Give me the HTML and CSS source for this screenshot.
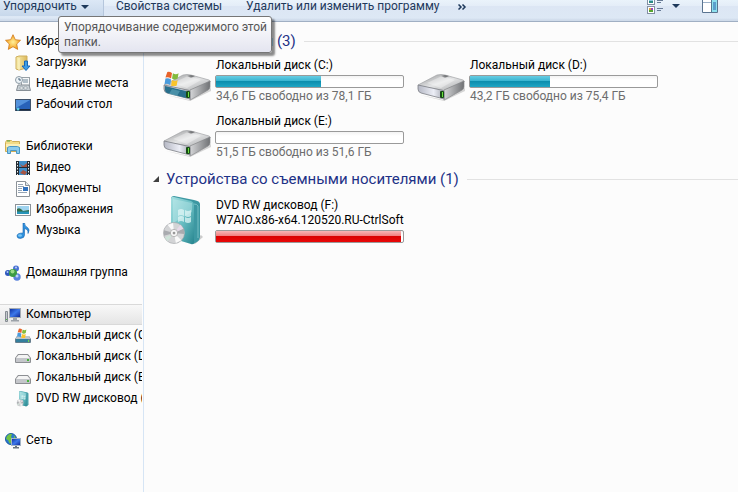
FILE: index.html
```html
<!DOCTYPE html>
<html lang="ru">
<head>
    <meta charset="UTF-8">
    <meta name="viewport" content="width=device-width, initial-scale=1.0">
    <title>Компьютер</title>
    <link rel="stylesheet" href="styles.css">
</head>
<body>
    <svg class="defs" aria-hidden="true">
        <defs>
            <linearGradient id="g-top" x1="0" y1="0" x2="1" y2="1">
                <stop offset="0" stop-color="#909294"/>
                <stop offset=".5" stop-color="#e4e5e6"/>
                <stop offset="1" stop-color="#a4a6a8"/>
            </linearGradient>
            <linearGradient id="g-side" x1="0" y1="0" x2="1" y2="0">
                <stop offset="0" stop-color="#d5d6d8"/>
                <stop offset="1" stop-color="#707275"/>
            </linearGradient>
            <linearGradient id="g-front" x1="0" y1="0" x2="1" y2="0">
                <stop offset="0" stop-color="#b5b8c4"/>
                <stop offset=".6" stop-color="#eceef6"/>
                <stop offset="1" stop-color="#a5a8b2"/>
            </linearGradient>
            <linearGradient id="g-teal" x1="0" y1="0" x2="1" y2="1">
                <stop offset="0" stop-color="#a4dfe0"/>
                <stop offset=".5" stop-color="#6cc0c5"/>
                <stop offset="1" stop-color="#26858f"/>
            </linearGradient>
            <linearGradient id="g-folder" x1="0" y1="0" x2="1" y2="0">
                <stop offset="0" stop-color="#f8efb0"/>
                <stop offset="1" stop-color="#dcb95c"/>
            </linearGradient>
            <linearGradient id="g-screen" x1="0" y1="0" x2="1" y2="1">
                <stop offset="0" stop-color="#0a2a9c"/>
                <stop offset=".5" stop-color="#3c78ea"/>
                <stop offset="1" stop-color="#0a1f8c"/>
            </linearGradient>
            <radialGradient id="g-star">
                <stop offset="0" stop-color="#fff09a"/>
                <stop offset="1" stop-color="#f6a01c"/>
            </radialGradient>
        </defs>
        <symbol id="flag" viewBox="0 0 16 16">
            <path d="M3 1q2-1 5 1L7 8Q4 6 1 7z" fill="#e8632b"/>
            <path d="M9 2.500q3 2 6 0L14 8q-3 2-6 0z" fill="#83bb3c"/>
            <path d="M1 8q3-1 6 1l-1 6q-3-2-6-1z" fill="#4a9bdc"/>
            <path d="M8 9.500q3 2 6 0l-1 6q-3 2-6 0z" fill="#fac42c"/>
        </symbol>
        <symbol id="drive" viewBox="0 0 48 28">
            <path d="M3 22l24 5 21-12v3L27 28z" fill="#bbb" opacity=".6"/>
            <path d="M1 12L20 2q4-1 8 0l18 5q2 1 1 2L28 17q-2 1-4 0L2 13z" fill="url(#g-top)" stroke="#a2a4a6" stroke-width=".7"/>
            <path d="M27 17L47 8v6q0 2-2 3l-16 9-2 1z" fill="url(#g-side)" stroke="#85878a" stroke-width=".7"/>
            <path d="M1 12l23 5q3 0 3 2v7L4 20q-3-1-3-4z" fill="url(#g-front)" stroke="#7c7f85" stroke-width=".8"/>
            <path d="M24 3l4-1 4 1-4 2z" fill="#77797b"/>
            <path d="M10 10l15-7 13 4-14 8z" fill="#fff" opacity=".35"/>
            <rect x="23" y="18" width="4" height="7" rx="1" fill="#174d16"/>
            <path d="M25.500 19v5" stroke="#6be03d"/>
        </symbol>
        <symbol id="drive-s" viewBox="0 0 16 16">
            <path d="M3 5h10l3 4v4q0 1-1 1H1q-1 0-1-1V9z" fill="#8d8f93"/>
            <path d="M3.500 6h9L15 9H1z" fill="#f4f4f4"/>
            <rect x="1" y="9" width="14" height="4" fill="#c4c6ca"/>
            <rect x="12" y="10" width="2" height="2" fill="#46b53b"/>
        </symbol>
        <symbol id="disc" viewBox="0 0 24 24">
            <circle cx="12" cy="12" r="11.500" fill="#d3d4d6" stroke="#a4a7aa" stroke-width=".7"/>
            <path d="M12 12L5 3l6-2zM12 12l8 8-6 3z" fill="#fafafa"/>
            <path d="M12 12L1 9v6zM12 12l11-5v6z" fill="#a9abaf"/>
            <path d="M12 12l7-9 3 4z" fill="#e6d9e8"/>
            <path d="M12 12l-7 9-3-4z" fill="#cfe3d9"/>
            <circle cx="12" cy="12" r="4" fill="#f7f7f7" stroke="#999" stroke-width=".7"/>
            <circle cx="12" cy="12" r="1.500" fill="#999"/>
        </symbol>
        <symbol id="dvd" viewBox="0 0 40 50">
            <path d="M28 47l10-8 2 2-8 7z" fill="#ccc"/>
            <path d="M8 3q0-3 3-3l20 4q6 1 6 4v33q0 3-3 5l-4 2L8 40z" fill="#3d98a2"/>
            <path d="M8 3q0-3 3-2l17 4q3 1 3 4v37q0 3-3 2L8 42z" fill="url(#g-teal)"/>
            <path d="M10 3l19 4v9L10 27z" fill="#d3f4f4" opacity=".35"/>
            <path d="M31 8q3 0 4 2v32" fill="none" stroke="#8fd0d4" stroke-width=".7"/>
            <path d="M15 14q3-2 6 0v6q-3-2-6 0zM22 14q3 2 6 0v6q-3 2-6 0zM15 21q3-2 6 0v5q-3-2-6 0zM22 21q3 2 6 0v5q-3 2-6 0z" fill="#dff6f5" opacity=".75"/>
            <use href="#disc" x="0" y="25" width="22" height="24"/>
        </symbol>
        <symbol id="globe" viewBox="0 0 12 12">
            <circle cx="6" cy="6" r="5.500" fill="#2a78cf" stroke="#185aa4"/>
            <path d="M2 3q3-3 5-2L6 4l2 2-3 5-2-4-2-1zM9 2l2 4-2 1z" fill="#72c341"/>
        </symbol>
    </svg>

    <header class="toolbar">
        <button type="button" class="tool tool-active">Упорядочить <span class="caret"></span></button>
        <button type="button" class="tool">Свойства системы</button>
        <button type="button" class="tool">Удалить или изменить программу</button>
        <button type="button" class="tool more" aria-label="Ещё">
            <svg width="9" height="6" viewBox="0 0 9 6"><path d="M.5.5L3 3 .5 5.500M4.500.5L7 3 4.500 5.500" fill="none" stroke="#1e395b" stroke-width="1.500"/></svg>
        </button>
        <div class="tool-right">
            <button type="button" class="view" aria-label="Изменить представление">
                <svg width="16" height="14" viewBox="0 0 16 14">
                    <rect x=".5" y="-1.500" width="7" height="6" fill="#fff" stroke="#8290a4"/>
                    <path d="M2 0h4v1H2z" fill="#8cc8e0"/><path d="M2 1h4v2H2z" fill="#2b8a83"/>
                    <rect x=".5" y="6.500" width="7" height="7" fill="#fff" stroke="#8290a4"/>
                    <path d="M2 8h2v2H2z" fill="#d9a23c"/><path d="M4 8h2v2H4z" fill="#9d45b5"/><path d="M2 10h4v2H2z" fill="#55a530"/>
                    <path d="M10 .5h6M10 2.500h4M10 8.500h6M10 10.500h4" stroke="#687b96"/>
                </svg>
                <span class="caret"></span>
            </button>
            <button type="button" class="pane-toggle" aria-label="Область просмотра">
                <svg width="16" height="13" viewBox="0 0 16 13">
                    <path d="M.5-1v13.500h15V-1" fill="#fff" stroke="#5a7490"/>
                    <path d="M1 2.500h8" stroke="#9db2c9"/>
                    <path d="M9 0h6v12H9z" fill="#8de0ee"/>
                    <path d="M11 2h3v8h-3z" fill="#5b9fcc"/>
                    <path d="M9.500 0v12" stroke="#557893"/>
                </svg>
            </button>
        </div>
        <div class="tooltip" role="tooltip">Упорядочивание содержимого этой<br>папки.</div>
    </header>

    <div class="window">
        <nav class="sidebar">
            <ul class="tree">
                <li><a href="#" class="item">
                    <svg class="icon" viewBox="0 0 16 16"><path d="M8 .7l2.300 5 5.200.6-3.800 3.700 1 5.400L8 12.700l-4.700 2.700 1-5.400L.5 6.300l5.200-.6z" fill="url(#g-star)" stroke="#cf7a1c" stroke-width=".8"/></svg>
                    Избранное</a>
                    <ul>
                        <li><a href="#" class="item">
                            <svg class="icon" viewBox="0 0 16 16">
                                <path d="M1 2l3-1h8v12l-8 2-3-1z" fill="url(#g-folder)" stroke="#cfae5a"/>
                                <path d="M4 3v12" stroke="#fff8cf"/>
                                <path d="M9.500 6h3v5h2.500l-4 4.500L7 11h2.500z" fill="#3d9ce6" stroke="#1a68b4"/>
                            </svg>
                            Загрузки</a></li>
                        <li><a href="#" class="item">
                            <svg class="icon" viewBox="0 0 16 16">
                                <rect x="6.500" y="1.500" width="8" height="8" fill="#f5f7f8" stroke="#98a0a6"/>
                                <path d="M8 4h5M8 6h5" stroke="#6e8798"/>
                                <path d="M3 9h11l1.500 5.500h-14z" fill="#c9d0d5" stroke="#878f96"/>
                                <path d="M5 11h3v2H5zM9 11h3v2H9z" fill="#fff" stroke="#71808b" stroke-width=".5"/>
                                <circle cx="4" cy="4" r="3.500" fill="#edf3f7" stroke="#8e9ba5"/>
                                <path d="M4 2v2h2" fill="none" stroke="#49657c"/>
                            </svg>
                            Недавние места</a></li>
                        <li><a href="#" class="item">
                            <svg class="icon" viewBox="0 0 16 16">
                                <rect x=".5" y="2.500" width="15" height="11" fill="#2862b9" stroke="#40546d"/>
                                <path d="M1 3h14L1 11z" fill="#5492dc"/>
                                <path d="M1 12h14v1.500H1z" fill="#18263b"/>
                                <circle cx="3" cy="12" r="1.500" fill="#5bc8e4"/>
                            </svg>
                            Рабочий стол</a></li>
                    </ul>
                </li>
                <li><a href="#" class="item">
                    <svg class="icon" viewBox="0 0 16 16">
                        <path d="M.5 3.500l1-2h5l1 1h7v10H.5z" fill="#f3dc86" stroke="#cfad55"/>
                        <path d="M2 2h3" stroke="#54a851"/>
                        <path d="M1 5h14v3H1z" fill="#fbefb6"/>
                        <path d="M2.500 14.500v-6l2-1h8l2 1v6h-3v-3h-6v3z" fill="#8acbed" stroke="#4c97c4"/>
                    </svg>
                    Библиотеки</a>
                    <ul>
                        <li><a href="#" class="item">
                            <svg class="icon" viewBox="0 0 16 16">
                                <rect x="1" y="1" width="14" height="14" fill="#232b33"/>
                                <path d="M4 1h8v6H4zM4 8h8v7H4z" fill="#438fc9"/>
                                <path d="M5 4l3 2 4-3v4H7zM5 13l3-3 4 2-2 3z" fill="#a65442"/>
                                <path d="M2.500 2v13M13.500 2v13" stroke="#edf0f2" stroke-dasharray="1.500 1.500"/>
                            </svg>
                            Видео</a></li>
                        <li><a href="#" class="item">
                            <svg class="icon" viewBox="0 0 16 16">
                                <path d="M1.500.5h9l4 4v11h-13z" fill="#fff" stroke="#8c9298"/>
                                <path d="M10.500.5v4h4" fill="#dfe5ea" stroke="#8c9298"/>
                                <path d="M3 3.500h5M3 5.500h6M3 7.500h4M3 9.500h4M3 11.500h9" stroke="#97a5b4"/>
                                <path d="M8 6h5v4H8z" fill="#3171bd"/>
                            </svg>
                            Документы</a></li>
                        <li><a href="#" class="item">
                            <svg class="icon" viewBox="0 0 16 16">
                                <rect x=".5" y="2.500" width="15" height="11" fill="#fff" stroke="#8b9298"/>
                                <path d="M2 4h12v5H2z" fill="#9fd3ef"/>
                                <path d="M2 7q3-2 6 2l6-1v2H2z" fill="#346d4a"/>
                                <path d="M2 9.500h12V12H2z" fill="#2694b8"/>
                            </svg>
                            Изображения</a></li>
                        <li><a href="#" class="item">
                            <svg class="icon" viewBox="0 0 16 16">
                                <path d="M8 0h1.500q0 3 3 4.500 3 2 .5 6 .5-4-3.500-5V12q0 3-4 3.500-3.500 0-3.500-2.500 0-3 6-3z" fill="#2e91dd" stroke="#1767b2" stroke-width=".6"/>
                                <ellipse cx="5" cy="12.500" rx="2" ry="1.200" fill="#7bc7f5"/>
                            </svg>
                            Музыка</a></li>
                    </ul>
                </li>
                <li><a href="#" class="item">
                    <svg class="icon" viewBox="0 0 16 16">
                        <circle cx="11" cy="3.500" r="3" fill="#4a73d4"/>
                        <circle cx="3" cy="8" r="3" fill="#2e57bd"/>
                        <circle cx="12" cy="12" r="3.700" fill="#5a83dc"/>
                        <circle cx="8" cy="8" r="4" fill="#3b9b42"/>
                        <circle cx="7.500" cy="6.500" r="2" fill="#9adb86"/>
                        <circle cx="2.500" cy="7" r="1" fill="#adc7f5"/>
                        <circle cx="11" cy="2.500" r="1" fill="#bdd0f7"/>
                        <circle cx="12" cy="11" r="1.500" fill="#bdd0f7"/>
                    </svg>
                    Домашняя группа</a></li>
                <li><a href="#" class="item selected" aria-current="page">
                    <svg class="icon" viewBox="0 0 16 16">
                        <path d="M.5 4.500h2v10h-2z" fill="#c6cacf" stroke="#868c93"/>
                        <rect x="4.500" y="1.500" width="11" height="9" fill="url(#g-screen)" stroke="#a3aab3"/>
                        <path d="M8 11h4v2h2v1.500H6V13h2z" fill="#9ca2a9"/>
                        <path d="M1 12h1v1H1z" fill="#4cc43e"/>
                    </svg>
                    Компьютер</a>
                    <ul>
                        <li><a href="#" class="item">
                            <svg class="icon" viewBox="0 0 16 16">
                                <path d="M2 8h12l2 3v3q0 1-1 1H1q-1 0-1-1v-3z" fill="#667e8e"/>
                                <path d="M2 8h12l1.500 3H.5z" fill="#bdc5ca"/>
                                <path d="M1 11h12v3H1z" fill="#347f9d"/>
                                <path d="M13 12h1v2h-1z" fill="#69df50"/>
                                <use href="#flag" x="2" y="0" width="10" height="10"/>
                            </svg>
                            Локальный диск (C:)</a></li>
                        <li><a href="#" class="item"><svg class="icon"><use href="#drive-s"/></svg>Локальный диск (D:)</a></li>
                        <li><a href="#" class="item"><svg class="icon"><use href="#drive-s"/></svg>Локальный диск (E:)</a></li>
                        <li><a href="#" class="item"><svg class="icon"><use href="#dvd"/></svg>DVD RW дисковод (F:)</a></li>
                    </ul>
                </li>
                <li><a href="#" class="item">
                    <svg class="icon" viewBox="0 0 16 16">
                        <use href="#globe" x="0" y="0" width="12" height="12"/>
                        <rect x="6.500" y="5.500" width="9" height="7" fill="url(#g-screen)" stroke="#a3b4c6"/>
                        <path d="M10 13h2v1h2v1.500H8V14h2z" fill="#69747e"/>
                    </svg>
                    Сеть</a></li>
            </ul>
        </nav>

        <main class="content">
            <section>
                <h2 class="group"><span class="arrow"></span>Жесткие диски (3)</h2>
                <div class="tiles">
                    <article class="tile">
                        <svg class="thumb" viewBox="0 0 48 50">
                            <use href="#drive" x="0" y="15" width="48" height="28"/>
                            <path d="M2 28l21 5v7L4 35q-2-1-2-3z" fill="#286f8c"/>
                            <path d="M9 31l8 2-3 5-8-2z" fill="#6ab2c4" opacity=".5"/>
                            <use href="#flag" x="1" y="13" width="16" height="15"/>
                        </svg>
                        <div class="info">
                            <p class="name">Локальный диск (C:)</p>
                            <div class="bar"><div class="fill" style="width: 56%"></div></div>
                            <p class="free">34,6 ГБ свободно из 78,1 ГБ</p>
                        </div>
                    </article>
                    <article class="tile">
                        <svg class="thumb" viewBox="0 0 48 50"><use href="#drive" x="0" y="15" width="48" height="28"/></svg>
                        <div class="info">
                            <p class="name">Локальный диск (D:)</p>
                            <div class="bar"><div class="fill" style="width: 43%"></div></div>
                            <p class="free">43,2 ГБ свободно из 75,4 ГБ</p>
                        </div>
                    </article>
                    <article class="tile">
                        <svg class="thumb" viewBox="0 0 48 50"><use href="#drive" x="0" y="15" width="48" height="28"/></svg>
                        <div class="info">
                            <p class="name">Локальный диск (E:)</p>
                            <div class="bar"><div class="fill" style="width: 0%"></div></div>
                            <p class="free">51,5 ГБ свободно из 51,6 ГБ</p>
                        </div>
                    </article>
                </div>
            </section>
            <section>
                <h2 class="group"><span class="arrow"></span>Устройства со съемными носителями (1)</h2>
                <div class="tiles">
                    <article class="tile tile-disc">
                        <svg class="thumb" viewBox="0 0 48 50"><use href="#dvd" x="0" y="0" width="40" height="50"/></svg>
                        <div class="info">
                            <p class="name">DVD RW дисковод (F:)</p>
                            <p class="name">W7AIO.x86-x64.120520.RU-CtrlSoft</p>
                            <div class="bar"><div class="fill full" style="width: 99%"></div></div>
                        </div>
                    </article>
                </div>
            </section>
        </main>
    </div>
</body>
</html>
```

FILE: styles.css
```css
* {
    box-sizing: border-box;
}

body {
    margin: 0;
    min-height: 100vh;
    display: flex;
    flex-direction: column;
    background: #fcfcfc;
    color: #000;
    font-family: Roboto, "Open Sans", sans-serif;
    font-size: 12px;
    line-height: 15px;
}

h2, p, ul {
    margin: 0;
    padding: 0;
}

ul {
    list-style: none;
}

a {
    color: inherit;
    text-decoration: none;
}

button {
    border: 0;
    padding: 0;
    background: none;
    font: inherit;
    color: #1e395b;
}

.defs {
    position: absolute;
    width: 0;
    height: 0;
}

/* toolbar */
.toolbar {
    position: relative;
    display: flex;
    align-items: flex-start;
    height: 22px;
    background: linear-gradient(#eaf3fb 0, #e4edf8 6px, #dce6f4 6px, #dde8f5 18px, #cfdbea 20px);
    border-bottom: 1px solid #a0afc3;
}

.tool {
    display: flex;
    align-items: center;
    height: 16px;
    padding: 0 12px 3px;
    white-space: nowrap;
}

.tool-active {
    padding: 0 14px 3px 3px;
    border-right: 1px solid #b5c6dc;
    background: linear-gradient(#dce8f6, #c8d8eb);
}

.more {
    padding: 0 0 3px 6px;
}

.caret {
    margin-left: 4px;
    border: 4px solid transparent;
    border-top-color: #1e395b;
    border-bottom: 0;
}

.tool-right {
    margin-left: auto;
    display: flex;
    align-items: flex-start;
    gap: 22px;
    padding-right: 20px;
}

.view,
.pane-toggle {
    display: flex;
    align-items: flex-start;
}

.view .caret {
    margin: 4px 0 0 9px;
}

.tooltip {
    position: absolute;
    z-index: 1;
    left: 58px;
    top: 16px;
    min-width: 213px;
    padding: 3px 4px 2px 5px;
    border: 1px solid #767676;
    border-radius: 3px;
    background: linear-gradient(#fff, #e4e5f0);
    box-shadow: 3px 3px 2px rgba(0, 0, 0, 0.45);
    color: #575757;
    white-space: nowrap;
}

/* window */
.window {
    flex: 1;
    display: flex;
}

.sidebar {
    flex: 0 0 144px;
    overflow: hidden;
    padding: 9px 1px 0 0;
    border-right: 1px solid #d6e5f5;
}

.tree {
    display: flex;
    flex-direction: column;
    gap: 21px;
}

.item {
    display: flex;
    align-items: center;
    gap: 5px;
    height: 21px;
    padding-left: 5px;
    overflow: hidden;
    line-height: 17px;
    white-space: nowrap;
}

.tree ul .item {
    padding-left: 15px;
}

.selected {
    border: 1px solid #d9d9d9;
    border-width: 1px 0;
    background: linear-gradient(#f8f8f8, #e5e5e5);
}

.icon {
    flex: none;
    width: 16px;
    height: 16px;
}

.content {
    flex: 1;
    min-width: 0;
    padding: 9px 0 0 9px;
    display: flex;
    flex-direction: column;
    gap: 10px;
}

.group {
    display: flex;
    align-items: center;
    height: 20px;
    font-size: 15px;
    font-weight: normal;
    color: #1e3287;
    white-space: nowrap;
}

.group::after {
    content: "";
    flex: 1;
    margin-left: 8px;
    border-top: 1px solid #e2e2e2;
}

.arrow {
    margin-right: 7px;
    border-left: 6px solid transparent;
    border-bottom: 6px solid #404040;
}

.tiles {
    display: grid;
    grid-template-columns: repeat(auto-fill, 254px);
    gap: 11px 0;
    padding: 7px 0 0 10px;
}

.tile {
    display: flex;
    gap: 4px;
    height: 45px;
}

.thumb {
    flex: none;
    width: 48px;
    height: 50px;
}

.info {
    width: 189px;
    white-space: nowrap;
}

.tile-disc .info {
    padding-top: 2px;
}

.name,
.free {
    padding-left: 1px;
}

.bar {
    height: 13px;
    margin: 2px 0 1px;
    border: 1px solid #9a9a9a;
    border-radius: 2px;
    background: linear-gradient(#f3f3f3, #fff 4px);
}

.fill {
    height: 100%;
    background: linear-gradient(#66cde3, #38b3d0 45%, #0d8eae 50%, #1fa5c4);
}

.full {
    background: linear-gradient(#f8b5b5, #f17e7e 45%, #da0000 50%, #e80808);
}

.free {
    color: #6d6d6d;
}
```
